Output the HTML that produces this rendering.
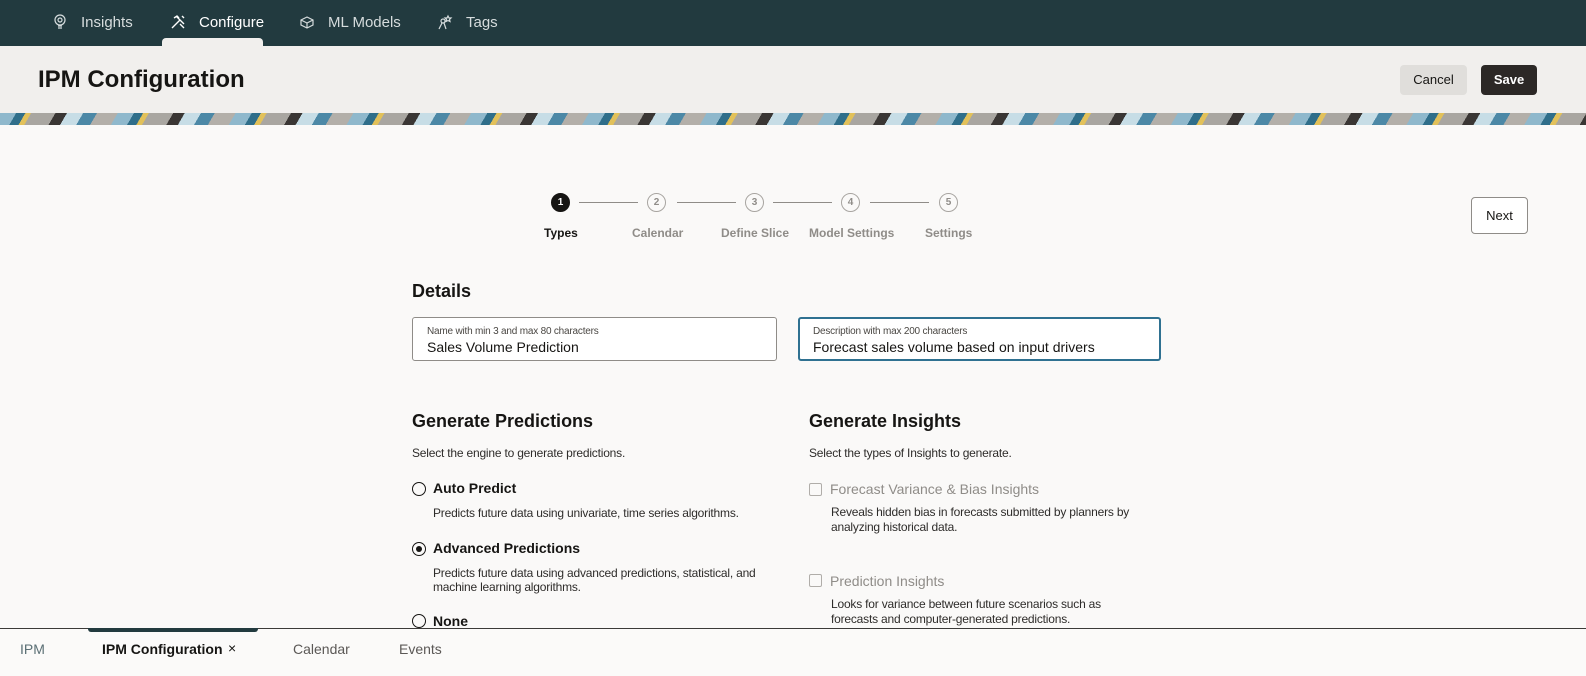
<!DOCTYPE html>
<html><head><style>
*{margin:0;padding:0;box-sizing:border-box}
body{width:1586px;height:676px;overflow:hidden;background:#faf9f8;font-family:"Liberation Sans",sans-serif;color:#161513;position:relative}
.a{position:absolute;white-space:nowrap}
.nav{position:absolute;left:0;top:0;width:1586px;height:46px;background:#223a3f}
.nav .a{color:#d6dcdd;font-size:15px;top:14px}
.hdr{position:absolute;left:0;top:46px;width:1586px;height:67px;background:#f1efed}
.band{position:absolute;left:0;top:113px;width:1586px;height:12px;background:repeating-linear-gradient(120deg,#8fb8cc 0 14px,#2f6e8a 14px 22px,#e2c15a 22px 27px,#a9a6a1 27px 48px,#3a3634 48px 58px,#c7dde6 58px 72px,#4c88a6 72px 84px,#b3afa9 84px 102px)}
.step{position:absolute;top:193px;width:19px;height:19px;border-radius:50%;border:1.5px solid #a8a5a1;color:#8f8c88;font-size:10px;font-weight:bold;display:flex;align-items:center;justify-content:center}
.ln{position:absolute;top:202px;height:1px;background:#8f8c88}
.sl{position:absolute;top:226px;font-size:12px;font-weight:bold;color:#8f8c88}
.field{position:absolute;top:317px;height:44px;border:1px solid #8f8c88;border-radius:3px;background:#fff}
.field .l{position:absolute;left:14px;top:8px;font-size:10px;color:#4a4743;letter-spacing:-.2px}
.field .v{position:absolute;left:14px;top:21px;font-size:14px;color:#161513}
h2{position:absolute;font-size:18px;font-weight:bold}
.p{font-size:12px;color:#2e2c2a;letter-spacing:-.2px}
.radio{position:absolute;width:14px;height:14px;border:1.5px solid #161513;border-radius:50%}
.cb{position:absolute;width:13px;height:13px;border:1px solid #b0ada9;border-radius:2px}
</style></head><body>
<div class="nav">
<svg class="a" style="left:53px;top:14px" width="14" height="16" viewBox="0 0 14 16" fill="none" stroke="#d6dcdd" stroke-width="1.2"><circle cx="7" cy="6" r="5"/><circle cx="7" cy="6" r="2"/><path d="M5 12h4M5 14h4"/></svg>
<span class="a" style="left:81px">Insights</span>
<div class="a" style="left:162px;top:38px;width:101px;height:8px;background:#f1efed;border-radius:4px 4px 0 0"></div>
<svg class="a" style="left:170px;top:14px" width="16" height="16" viewBox="0 0 16 16" fill="none" stroke="#fff" stroke-width="1.4"><path d="M2 14L10 6M6 2l8 8M4 4l3-2 2 2M10 10l4 4M12 2l2 2"/></svg>
<span class="a" style="left:199px;color:#fff">Configure</span>
<svg class="a" style="left:299px;top:15px" width="16" height="14" viewBox="0 0 16 14" fill="none" stroke="#d6dcdd" stroke-width="1.2"><path d="M2 5l6-3 6 3v5l-6 3-6-3z M2 5l6 3 6-3M8 8v5"/></svg>
<span class="a" style="left:328px">ML Models</span>
<svg class="a" style="left:437px;top:14px" width="16" height="16" viewBox="0 0 16 16" fill="none" stroke="#d6dcdd" stroke-width="1.2"><circle cx="6" cy="7" r="2"/><path d="M2 15l3-6M9 15l-2-6M11 2l1 2 2 0-1.5 1.5.5 2-2-1-2 1 .5-2L8 4h2z"/></svg>
<span class="a" style="left:466px">Tags</span>
</div>
<div class="hdr">
<span class="a" style="left:38px;top:20px;font-size:24px;font-weight:bold">IPM Configuration</span>
<div class="a" style="left:1400px;top:19px;width:67px;height:30px;background:#e0dedb;border-radius:4px;font-size:13px;text-align:center;line-height:30px">Cancel</div>
<div class="a" style="left:1481px;top:19px;width:56px;height:30px;background:#2c2826;border-radius:4px;font-size:13px;font-weight:bold;color:#fff;text-align:center;line-height:30px">Save</div>
</div>
<div class="band"></div>

<div class="step" style="left:551px;background:#161513;border-color:#161513;color:#fff">1</div>
<div class="ln" style="left:579px;width:59px"></div>
<div class="step" style="left:647px">2</div>
<div class="ln" style="left:677px;width:59px"></div>
<div class="step" style="left:745px">3</div>
<div class="ln" style="left:773px;width:59px"></div>
<div class="step" style="left:841px">4</div>
<div class="ln" style="left:870px;width:59px"></div>
<div class="step" style="left:939px">5</div>
<span class="sl a" style="left:544px;color:#161513">Types</span>
<span class="sl a" style="left:632px">Calendar</span>
<span class="sl a" style="left:721px">Define Slice</span>
<span class="sl a" style="left:809px">Model Settings</span>
<span class="sl a" style="left:925px">Settings</span>
<div class="a" style="left:1471px;top:197px;width:57px;height:37px;border:1px solid #8f8c88;border-radius:4px;background:#fff;font-size:13px;text-align:center;line-height:35px">Next</div>

<h2 class="a" style="left:412px;top:281px">Details</h2>
<div class="field" style="left:412px;width:365px"><span class="a l">Name with min 3 and max 80 characters</span><span class="a v">Sales Volume Prediction</span></div>
<div class="field" style="left:798px;width:363px;border:2px solid #2f7191"><span class="a l" style="left:13px;top:7px">Description with max 200 characters</span><span class="a v" style="left:13px;top:20px">Forecast sales volume based on input drivers</span></div>

<h2 class="a" style="left:412px;top:411px">Generate Predictions</h2>
<span class="a p" style="left:412px;top:446px">Select the engine to generate predictions.</span>
<div class="radio" style="left:412px;top:482px"></div>
<span class="a" style="left:433px;top:480px;font-size:14px;font-weight:bold">Auto Predict</span>
<span class="a p" style="left:433px;top:506px">Predicts future data using univariate, time series algorithms.</span>
<div class="radio" style="left:412px;top:542px"><div style="position:absolute;left:2.5px;top:2.5px;width:6px;height:6px;border-radius:50%;background:#161513"></div></div>
<span class="a" style="left:433px;top:540px;font-size:14px;font-weight:bold">Advanced Predictions</span>
<span class="a p" style="left:433px;top:566px;line-height:14px">Predicts future data using advanced predictions, statistical, and<br>machine learning algorithms.</span>
<div class="radio" style="left:412px;top:614px"></div>
<span class="a" style="left:433px;top:613px;font-size:14px;font-weight:bold">None</span>

<h2 class="a" style="left:809px;top:411px">Generate Insights</h2>
<span class="a p" style="left:809px;top:446px">Select the types of Insights to generate.</span>
<div class="cb" style="left:809px;top:483px"></div>
<span class="a" style="left:830px;top:481px;font-size:14px;color:#8f8c88">Forecast Variance &amp; Bias Insights</span>
<span class="a p" style="left:831px;top:505px;line-height:15px">Reveals hidden bias in forecasts submitted by planners by<br>analyzing historical data.</span>
<div class="cb" style="left:809px;top:574px"></div>
<span class="a" style="left:830px;top:573px;font-size:14px;color:#8f8c88">Prediction Insights</span>
<span class="a p" style="left:831px;top:597px;line-height:15px">Looks for variance between future scenarios such as<br>forecasts and computer-generated predictions.</span>

<div class="a" style="left:0;top:628px;width:1586px;height:48px;background:#fbfaf9;border-top:1px solid #3b3a38"></div>
<div class="a" style="left:88px;top:628px;width:170px;height:4px;background:#223a3f;border-radius:0 0 3px 3px"></div>
<span class="a" style="left:20px;top:641px;font-size:14px;color:#5b6f75">IPM</span>
<span class="a" style="left:102px;top:641px;font-size:14px;font-weight:bold">IPM Configuration</span>
<span class="a" style="left:228px;top:640px;font-size:14px">×</span>
<span class="a" style="left:293px;top:641px;font-size:14px;color:#5b5856">Calendar</span>
<span class="a" style="left:399px;top:641px;font-size:14px;color:#5b5856">Events</span>
</body></html>
